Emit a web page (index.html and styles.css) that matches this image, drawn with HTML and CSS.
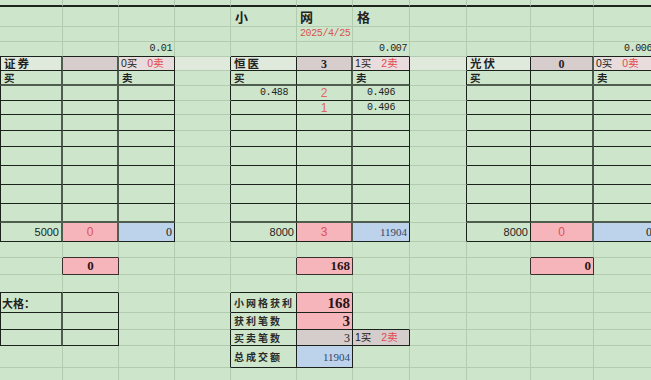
FILE: index.html
```html
<!DOCTYPE html>
<html lang="zh-CN">
<head>
<meta charset="utf-8">
<title>小网格</title>
<link rel="stylesheet" href="styles.css">
</head>
<body>
<table class="sheet">
<colgroup>
<col class="w63"><col class="w56"><col class="w56"><col class="w56"><col class="w66"><col class="w56"><col class="w57"><col class="w57"><col class="w64"><col class="w63"><col class="w61">
</colgroup>
<tbody>
<tr class="h7 top"><td></td><td></td><td></td><td></td><td></td><td></td><td></td><td></td><td></td><td></td><td></td></tr>
<tr class="h20"><td></td><td></td><td></td><td></td><td class="ttl p4">小</td><td class="ttl p3">网</td><td class="ttl p4">格</td><td></td><td></td><td></td><td></td></tr>
<tr class="h15"><td></td><td></td><td></td><td></td><td></td><td class="mono red p3">2025/4/25</td><td></td><td></td><td></td><td></td><td></td></tr>
<tr class="h15"><td class="bb"></td><td class="bb"></td><td class="bb mono r">0.01</td><td></td><td class="bb"></td><td class="bb"></td><td class="bb mono r">0.007</td><td></td><td class="bb"></td><td class="bb"></td><td class="bb mono r">0.006</td></tr>
<tr class="h14 hl">
<td class="bl brg bb hd">证券</td><td class="brg bb gp"></td><td class="br bb lp bs"><span>0买</span><span class="red sp">0卖</span></td>
<td class="br"></td>
<td class="br bb hd">恒医</td><td class="brg bb gp c ser b">3</td><td class="br bb lp bs"><span>1买</span><span class="red sp">2卖</span></td>
<td class="br"></td>
<td class="br bb hd">光伏</td><td class="brg bb gp c ser b">0</td><td class="br bb lp bs"><span>0买</span><span class="red sp">0卖</span></td>
</tr>
<tr class="h15">
<td class="bl brg bbg bsl">买</td><td class="brg bbg"></td><td class="br bbg bsl">卖</td>
<td class="br"></td>
<td class="br bbg bsl">买</td><td class="brg bbg"></td><td class="br bbg bsl">卖</td>
<td class="br"></td>
<td class="br bbg bsl">买</td><td class="brg bbg"></td><td class="br bbg bsl">卖</td>
</tr>
<tr class="h15">
<td class="bl brg bb"></td><td class="brg bb"></td><td class="br bb"></td>
<td class="br"></td>
<td class="br bb mono r p9">0.488</td><td class="brg bb c lred">2</td><td class="br bb mono c">0.496</td>
<td class="br"></td>
<td class="br bb"></td><td class="brg bb"></td><td class="br bb"></td>
</tr>
<tr class="h14">
<td class="bl brg bb"></td><td class="brg bb"></td><td class="br bb"></td>
<td class="br"></td>
<td class="br bb"></td><td class="brg bb c lred">1</td><td class="br bb mono c">0.496</td>
<td class="br"></td>
<td class="br bb"></td><td class="brg bb"></td><td class="br bb"></td>
</tr>
<tr class="h16">
<td class="bl brg bb"></td><td class="brg bb"></td><td class="br bb"></td><td class="br"></td>
<td class="br bb"></td><td class="brg bb"></td><td class="br bb"></td><td class="br"></td>
<td class="br bb"></td><td class="brg bb"></td><td class="br bb"></td>
</tr>
<tr class="h16">
<td class="bl brg bb"></td><td class="brg bb"></td><td class="br bb"></td><td class="br"></td>
<td class="br bb"></td><td class="brg bb"></td><td class="br bb"></td><td class="br"></td>
<td class="br bb"></td><td class="brg bb"></td><td class="br bb"></td>
</tr>
<tr class="h19">
<td class="bl brg bb"></td><td class="brg bb"></td><td class="br bb"></td><td class="br"></td>
<td class="br bb"></td><td class="brg bb"></td><td class="br bb"></td><td class="br"></td>
<td class="br bb"></td><td class="brg bb"></td><td class="br bb"></td>
</tr>
<tr class="h19">
<td class="bl brg bb"></td><td class="brg bb"></td><td class="br bb"></td><td class="br"></td>
<td class="br bb"></td><td class="brg bb"></td><td class="br bb"></td><td class="br"></td>
<td class="br bb"></td><td class="brg bb"></td><td class="br bb"></td>
</tr>
<tr class="h19">
<td class="bl brg bb"></td><td class="brg bb"></td><td class="br bb"></td><td class="br"></td>
<td class="br bb"></td><td class="brg bb"></td><td class="br bb"></td><td class="br"></td>
<td class="br bb"></td><td class="brg bb"></td><td class="br bb"></td>
</tr>
<tr class="h19">
<td class="bl brg bbg"></td><td class="brg bbg"></td><td class="br bbg"></td><td class="br"></td>
<td class="br bbg"></td><td class="brg bbg"></td><td class="br bbg"></td><td class="br"></td>
<td class="br bbg"></td><td class="brg bbg"></td><td class="br bbg"></td>
</tr>
<tr class="h19">
<td class="bl brg bb r">5000</td><td class="brg bb pink c rd">0</td><td class="br bb blue r ser">0</td>
<td class="br"></td>
<td class="br bb r">8000</td><td class="brg bb pink c rd">3</td><td class="br bb blue r ser nv">11904</td>
<td class="br"></td>
<td class="br bb r">8000</td><td class="brg bb pink c rd">0</td><td class="br bb blue r ser">0</td>
</tr>
<tr class="h16"><td></td><td class="bbx"></td><td></td><td></td><td></td><td class="bbx"></td><td></td><td></td><td></td><td class="bbx"></td><td></td></tr>
<tr class="h17">
<td class="brx"></td><td class="brx bbx pink c ser b bx">0</td><td></td><td></td>
<td class="brx"></td><td class="brx bbx pink r ser b bx">168</td><td></td><td></td>
<td class="brx"></td><td class="brx bbx pink r ser b bx">0</td><td></td>
</tr>
<tr class="h18"><td class="bb"></td><td class="bb"></td><td></td><td></td><td class="bb"></td><td class="bb"></td><td></td><td></td><td></td><td></td><td></td></tr>
<tr class="h20">
<td class="bl brg bb big">大格：</td><td class="br bb"></td><td></td>
<td class="br"></td>
<td class="br bb lbl">小网格获利</td><td class="br bb pink r ser b bv">168</td><td></td><td></td><td></td><td></td><td></td>
</tr>
<tr class="h17">
<td class="bl brg bb"></td><td class="br bb"></td><td></td>
<td class="br"></td>
<td class="br bb lbl">获利笔数</td><td class="br bb pink r ser b bv">3</td><td class="bb"></td><td></td><td></td><td></td><td></td>
</tr>
<tr class="h16">
<td class="bl brg bb"></td><td class="br bb"></td><td></td>
<td class="br"></td>
<td class="br bb lbl">买卖笔数</td><td class="br bb sg r ser m">3</td><td class="br bb sg bs"><span>1买</span><span class="red sp">2卖</span></td><td></td><td></td><td></td><td></td>
</tr>
<tr class="h22">
<td></td><td></td><td></td>
<td class="br"></td>
<td class="br bb lbl">总成交额</td><td class="br bb blue r ser nv">11904</td><td></td><td></td><td></td><td></td><td></td>
</tr>
<tr class="h20"><td></td><td></td><td></td><td></td><td></td><td></td><td></td><td></td><td></td><td></td><td></td></tr>
</tbody>
</table>
</body>
</html>
```

FILE: styles.css
```css
* { box-sizing: border-box; }
html, body { margin: 0; padding: 0; }
body {
  width: 651px;
  height: 380px;
  overflow: hidden;
  background: #cde6cb;
  font-family: "Liberation Sans", "Noto Sans CJK SC", sans-serif;
  color: #222;
}
.sheet {
  border-collapse: separate;
  border-spacing: 0;
  table-layout: fixed;
  width: 655px;
}
.w63 { width: 63px; }
.w56 { width: 56px; }
.w66 { width: 66px; }
.w57 { width: 57px; }
.w64 { width: 64px; }
.w61 { width: 61px; }

.h7 { height: 7px; }
.h14 { height: 14px; }
.h15 { height: 15px; }
.h16 { height: 16px; }
.h17 { height: 17px; }
.h18 { height: 18px; }
.h19 { height: 19px; }
.h20 { height: 20px; }
.h22 { height: 22px; }

.sheet td {
  border-right: 1px solid #b3ccb0;
  border-bottom: 1px solid #b3ccb0;
  padding: 0 2px;
  font-size: 11px;
  line-height: 12px;
  white-space: nowrap;
  vertical-align: middle;
  overflow: visible;
}
.top td { border-bottom: 2px solid #1d241d; }

/* borders */
.sheet td.bl { border-left: 1px solid #1b211b; }
.sheet td.br { border-right: 1px solid #1b211b; }
.sheet td.brg { border-right: 2px solid #4f5d4f; }
.sheet td.bb { border-bottom: 1px solid #1b211b; }
.sheet td.bbg { border-bottom: 2px solid #4f5d4f; }
.sheet td.brx { border-right: 1px solid #3a2e2e; }
.sheet td.bbx { border-bottom: 1px solid #3a2e2e; }

/* fills */
.hl td { background: #dfe9dc; }
.sheet td.gp { background: #d8cdcd; }
.sheet td.lp { background: #e8dcdc; }
.sheet td.pink { background: #f6b5bb; }
.sheet td.blue { background: #bdd3eb; }
.sheet td.sg { background: #d5cccc; }

/* text */
.sheet td.ttl { font-family: "Noto Sans CJK SC", sans-serif; font-weight: 700; font-size: 13px; }
.sheet td.hd { font-family: "Noto Sans CJK SC", sans-serif; font-weight: 700; font-size: 11.5px; line-height: 11px; letter-spacing: 2px; padding-left: 3px; }
.sheet td.bsl { font-family: "Noto Sans CJK SC", sans-serif; font-weight: 700; font-size: 10.5px; line-height: 11px; padding-left: 3px; }
.sheet td.bs { font-family: "Liberation Sans", "Noto Sans CJK SC", sans-serif; font-size: 10.5px; line-height: 11px; }
.sheet td.big { font-family: "Noto Sans CJK SC", sans-serif; font-weight: 700; font-size: 11px; padding-left: 1px; }
.sheet td.lbl { font-family: "Noto Sans CJK SC", sans-serif; font-weight: 700; font-size: 10px; letter-spacing: 2px; padding-left: 3px; color: #2a2a2a; }
.mono { font-family: "Liberation Mono", monospace; }
.sheet td.mono { font-size: 10px; letter-spacing: -0.4px; }
.ser { font-family: "Liberation Serif", serif; }
.sheet td.ser { font-size: 12px; }
.b { font-weight: 700; }
.sheet td.bx { font-size: 13px; color: #2b1515; }
.sheet td.bv { font-size: 15px; line-height: 14px; color: #2b1515; }
.sheet td.m { font-size: 12px; }
.sheet td.nv { font-size: 11px; color: #34456a; }
.c { text-align: center; }
.r { text-align: right; }
.sheet td.p3 { padding-left: 3px; }
.sheet td.p4 { padding-left: 4px; }
.sheet td.p9 { padding-right: 8px; }
.red { color: #e4484e; }
.sheet td.red { color: #d9534f; }
.sheet td.lred { color: #e06464; font-size: 12px; }
.sheet td.rd { color: #e0505a; font-size: 12px; }
.sp { margin-left: 10px; }
```
